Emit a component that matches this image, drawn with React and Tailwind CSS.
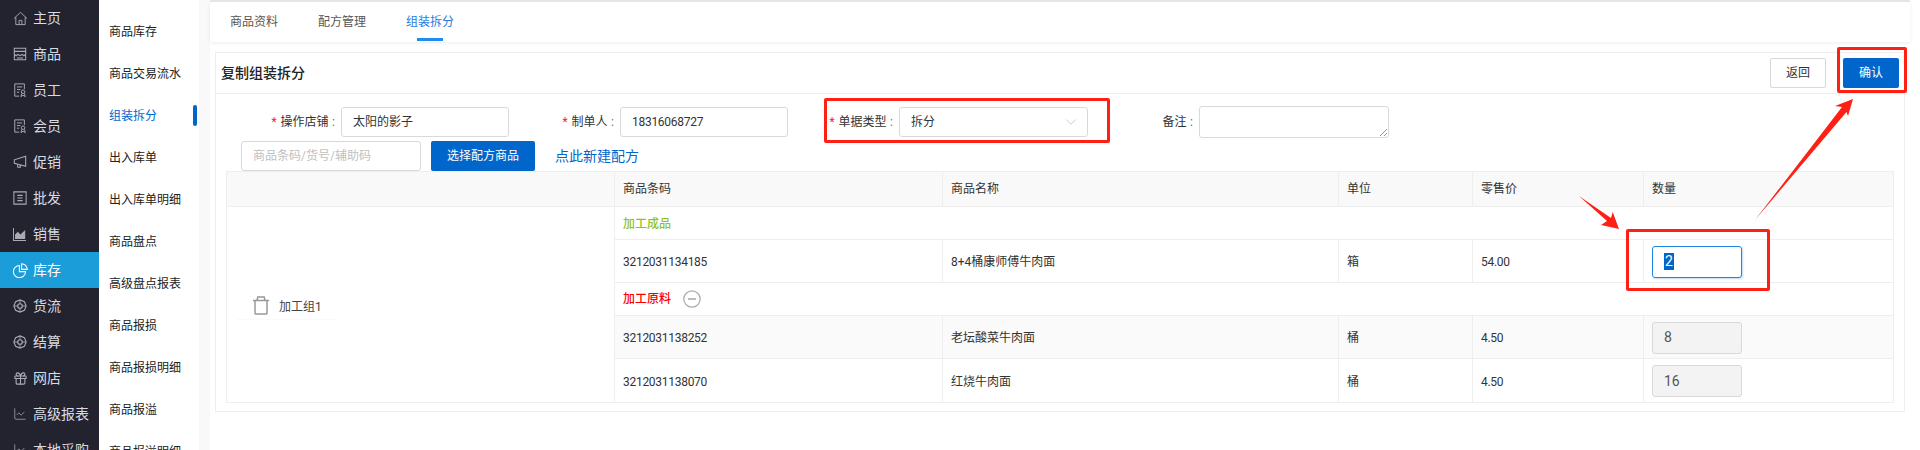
import { ChevronDown, Gift, ChartLine } from "lucide-react";

const FONT = "font-['Roboto','Noto_Sans_CJK_SC',sans-serif]";

const Home = () => (
  <svg viewBox="0 0 16 16" className="w-[15px] h-[15px]" fill="none" stroke="currentColor" strokeWidth="1">
    <path d="M1 8 8 1.5 15 8M3 6.5V14.5H13V6.5M6.5 14.5V10H9.5V14.5" />
  </svg>
);
const Shop = () => (
  <svg viewBox="0 0 16 16" className="w-[14px] h-[14px]" fill="none" stroke="currentColor" strokeWidth="1.2">
    <path d="M1.5 1.5H14.5V14.5H1.5ZM1.5 5H14.5M1.5 8.5 3.5 10 5.5 8.5 8 10 10.5 8.5 12.5 10 14.5 8.5M4.5 12.5H11.5" />
  </svg>
);
const DocBadge = () => (
  <svg viewBox="0 0 16 16" className="w-[14px] h-[16px]" fill="none" stroke="currentColor" strokeWidth="1.1">
    <path d="M7 15H2V1H13V7M4.5 4.5H10.5M4.5 7.5H8.5M4.5 10.5H7" />
    <circle cx="11.5" cy="10" r="2" />
    <path d="M10 12 9 15.5 11.5 14 14 15.5 13 12" />
  </svg>
);
const Horn = () => (
  <svg viewBox="0 0 16 16" className="w-[14px] h-[14px]" fill="none" stroke="currentColor" strokeWidth="1.2">
    <path d="M14.5 1.5V13L1.5 9.5V5.5ZM5 10.5 5.5 14H8.5L8 11.5" />
  </svg>
);
const ListBox = () => (
  <svg viewBox="0 0 16 16" className="w-[14px] h-[14px]" fill="none" stroke="currentColor" strokeWidth="1.2">
    <path d="M1 1H15V15H1ZM5 5H11M5 8H11M5 11H11" />
  </svg>
);
const AreaChart = () => (
  <svg viewBox="0 0 16 16" className="w-[13px] h-[13px]" fill="currentColor">
    <path d="M0 0H1.2V14.8H16V16H0Z" />
    <path d="M2.5 13.5V8L6 4.5 9 8 15 2.5V13.5Z" />
  </svg>
);
const Pie = () => (
  <svg viewBox="0 0 16 16" className="w-[15px] h-[15px]" fill="none" stroke="currentColor" strokeWidth="1.1">
    <path d="M6.8 2.6A6.5 6.5 0 1 0 13.4 9.2H6.8Z" />
    <path d="M9.2 0.8A6.2 6.2 0 0 1 15.2 6.8H9.2Z" />
  </svg>
);
const Flow = () => (
  <svg viewBox="0 0 16 16" className="w-[14px] h-[14px]" fill="none" stroke="currentColor" strokeWidth="1.3">
    <path d="M8 1 13 3 15 8 13 13 8 15 3 13 1 8 3 3Z" />
    <circle cx="8" cy="8" r="2.6" />
    <path d="M8 1V5.4M8 10.6V15M1 8H5.4M10.6 8H15" strokeWidth="1" />
  </svg>
);
const Bin = () => (
  <svg viewBox="0 0 18 19" className="w-[18px] h-[19px] mr-[9px]" fill="none" stroke="#999" strokeWidth="1.5">
    <path d="M1 4.5H17M5 4.5 5.8 1H12.2L13 4.5M3 4.5V17.2Q3 18 3.8 18H14.2Q15 18 15 17.2V4.5" />
  </svg>
);
const MinusRound = () => (
  <svg viewBox="0 0 18 18" className="w-[18px] h-[18px] ml-[12px]" fill="none" stroke="#aaa">
    <circle cx="9" cy="9" r="8.2" strokeWidth="1.2" />
    <path d="M5 9H13" strokeWidth="1.6" />
  </svg>
);

const MENU = [
  ["主页", Home],
  ["商品", Shop],
  ["员工", DocBadge],
  ["会员", DocBadge],
  ["促销", Horn],
  ["批发", ListBox],
  ["销售", AreaChart],
  ["库存", Pie],
  ["货流", Flow],
  ["结算", Flow],
  ["网店", () => <Gift size={15} strokeWidth={1.8} />],
  ["高级报表", () => <ChartLine size={14} strokeWidth={1.3} />],
  ["本地采购", () => <ChartLine size={14} strokeWidth={1.3} />],
];

const SUB_MENU = ["商品库存", "商品交易流水", "组装拆分", "出入库单", "出入库单明细", "商品盘点", "高级盘点报表", "商品报损", "商品报损明细", "商品报溢", "商品报溢明细"];

const Field = ({ label, required, children }) => (
  <>
    <label className="w-[111px] shrink-0 h-[30px] flex items-center justify-end pr-[6px] text-[12px] text-[#333]">
      {required && <span className="text-[#f5222d] mr-[4px]">*</span>}
      {label}<span className="ml-[3.5px] text-[#666]">:</span>
    </label>
    {children}
  </>
);

const Cell = ({ children, className = "" }) => (
  <td className={`border border-[#eeeeee] pl-[8px] text-[12px] text-[#333] ${className}`}>{children}</td>
);

const Qty = ({ value }) => (
  <div className="w-[90px] h-[32px] rounded-[3px] border border-[#d9d9d9] bg-[#f3f3f3] flex items-center pl-[11px] text-[14px] text-[#555]">{value}</div>
);

const NUM = "pt-[2px] tracking-[-0.28px]";

export default function App() {
  return (
    <div className={`relative w-[1920px] h-[450px] overflow-hidden flex bg-white ${FONT}`}>
      <aside className="w-[99px] shrink-0 bg-[#22232f]">
        {MENU.map(([name, Icon]) => (
          <div key={name} className={`h-[36px] flex items-center pl-[13px] text-[14px] ${name === "库存" ? "bg-[#1b9dd9] text-white" : "text-[#d9dbe2]"}`}>
            <span className={`w-[20px] flex justify-start ${name === "库存" ? "text-white" : "text-[#a9abb3]"}`}><Icon /></span>
            {name}
          </div>
        ))}
      </aside>

      <nav className="w-[100px] shrink-0 pt-[11px] pl-[10px] pr-[2px]">
        {SUB_MENU.map((name) => (
          <div key={name} className={`relative h-[42px] flex items-center text-[12px] ${name === "组装拆分" ? "text-[#0066cc]" : "text-[#222]"}`}>
            {name}
            {name === "组装拆分" && <span className="absolute left-[84px] top-[10px] w-[4px] h-[21px] rounded-[2px] bg-[#0066cc]" />}
          </div>
        ))}
      </nav>
      <div className="w-[11px] shrink-0 bg-[#f9f9f9]" />

      <main className="flex-1 min-w-0">
        <div className="h-[2px] w-[1700px] bg-[#e8e8e8]" />
        <div className="w-[1700px] h-[40px] flex items-start gap-[40px] pl-[20px] bg-white shadow-[0_1px_4px_rgba(0,0,0,0.08)] text-[12px] text-[#555]">
          <span className="h-[40px] flex items-center">商品资料</span>
          <span className="h-[40px] flex items-center">配方管理</span>
          <span className="relative h-[40px] flex items-center text-[#1f7ae0]">
            组装拆分
            <span className="absolute left-[11px] bottom-[1px] w-[26px] h-[3px] bg-[#1f8cf0]" />
          </span>
        </div>

        <section className="ml-[5px] mt-[10px] w-[1690px] h-[360px] border border-[#eeeeee]">
          <div className="h-[41px] border-b border-[#eeeeee] flex items-center pl-[5px] pr-[5px] justify-between">
            <h2 className="text-[14px] font-medium text-[#222]">复制组装拆分</h2>
            <div className="flex gap-[17px]">
              <button className="w-[56px] h-[30px] rounded-[2px] border border-[#d9d9d9] bg-white text-[12px] text-[#333]">返回</button>
              <button className="w-[56px] h-[30px] rounded-[2px] bg-[#0066cc] text-[12px] text-white">确认</button>
            </div>
          </div>

          <div className="flex items-start h-[34px] mt-[13px] text-[12px]">
            <div className="w-[14px] shrink-0" />
            <Field label="操作店铺" required>
              <div className="w-[168px] h-[30px] shrink-0 rounded-[3px] border border-[#d9d9d9] flex items-center pl-[11px] text-[#333]">太阳的影子</div>
            </Field>
            <Field label="制单人" required>
              <div className="w-[168px] h-[30px] shrink-0 rounded-[3px] border border-[#d9d9d9] flex items-center pl-[11px] text-[#333] tracking-[-0.28px]">18316068727</div>
            </Field>
            <Field label="单据类型" required>
              <div className="w-[189px] h-[30px] shrink-0 rounded-[3px] border border-[#d9d9d9] flex items-center justify-between pl-[11px] pr-[7px] text-[#333]">
                拆分
                <ChevronDown size={18} strokeWidth={0.9} className="text-[#b5b5b5]" />
              </div>
            </Field>
            <Field label="备注">
              <div className="relative w-[190px] h-[32px] shrink-0 -mt-[1px] rounded-[3px] border border-[#d9d9d9]">
                <svg viewBox="0 0 8 8" className="absolute right-[1px] bottom-[1px] w-[8px] h-[8px]" stroke="#777" strokeWidth="0.8">
                  <path d="M1 8 8 1M5 8 8 5" />
                </svg>
              </div>
            </Field>
          </div>

          <div className="flex items-center h-[30px] pl-[25px] text-[12px]">
            <div className="w-[180px] h-[30px] rounded-[3px] border border-[#d9d9d9] flex items-center pl-[11px] text-[#bfbfbf]">商品条码/货号/辅助码</div>
            <button className="ml-[10px] w-[104px] h-[30px] rounded-[2px] bg-[#0066cc] text-white">选择配方商品</button>
            <a className="ml-[20px] text-[14px] text-[#0066cc]">点此新建配方</a>
          </div>

          <table className="ml-[10px] w-[1667px] table-fixed border-collapse">
            <colgroup>
              <col className="w-[388px]" />
              <col className="w-[328px]" />
              <col className="w-[396px]" />
              <col className="w-[134px]" />
              <col className="w-[171px]" />
              <col className="w-[250px]" />
            </colgroup>
            <thead>
              <tr className="h-[35px] bg-[#f9f9f9]">
                <Cell />
                <Cell>商品条码</Cell>
                <Cell>商品名称</Cell>
                <Cell>单位</Cell>
                <Cell>零售价</Cell>
                <Cell>数量</Cell>
              </tr>
            </thead>
            <tbody>
              <tr className="h-[33px]">
                <td rowSpan={5} className="border border-[#eeeeee] align-top">
                  <div className="mt-[88px] ml-[9px] w-[102px] h-[25px] flex items-center border-b border-[#fafafa] pb-[4px] pl-[16px] text-[12px] text-[#444]">
                    <Bin />
                    <span className="pt-[3px]">加工组1</span>
                  </div>
                </td>
                <td colSpan={5} className="border border-[#eeeeee] pl-[8px] pt-[2px] text-[12px] font-medium text-[#8fc31f]">加工成品</td>
              </tr>
              <tr className="h-[43px]">
                <Cell className={NUM}>3212031134185</Cell>
                <Cell className="pt-[2px]">8+4桶康师傅牛肉面</Cell>
                <Cell className="pt-[2px]">箱</Cell>
                <Cell className={NUM}>54.00</Cell>
                <Cell className="pt-[1px]">
                  <div className="w-[90px] h-[32px] rounded-[3px] border border-[#1f86e0] shadow-[1px_1px_2px_rgba(31,134,224,0.3)] flex items-center pl-[11px] text-[14px]">
                    <span className="bg-[#0066cc] text-white leading-[17px] px-[1px]">2</span>
                  </div>
                </Cell>
              </tr>
              <tr className="h-[33px]">
                <td colSpan={5} className="border border-[#eeeeee] pl-[8px] text-[12px] font-medium text-[#ff0000]">
                  <span className="inline-flex items-center">
                    加工原料
                    <MinusRound />
                  </span>
                </td>
              </tr>
              <tr className="h-[43px] bg-[#fafafa]">
                <Cell className={NUM}>3212031138252</Cell>
                <Cell className="pt-[2px]">老坛酸菜牛肉面</Cell>
                <Cell className="pt-[2px]">桶</Cell>
                <Cell className={NUM}>4.50</Cell>
                <Cell className="pt-[1px]"><Qty value="8" /></Cell>
              </tr>
              <tr className="h-[44px]">
                <Cell className={NUM}>3212031138070</Cell>
                <Cell className="pt-[2px]">红烧牛肉面</Cell>
                <Cell className="pt-[2px]">桶</Cell>
                <Cell className={NUM}>4.50</Cell>
                <Cell className="pt-[1px]"><Qty value="16" /></Cell>
              </tr>
            </tbody>
          </table>
        </section>
      </main>

      {/* red annotations drawn over the page */}
      <div className="absolute left-[824px] top-[98px] w-[286px] h-[45px] border-[3px] border-[#ff2015] rounded-[2px]" />
      <div className="absolute left-[1837px] top-[47px] w-[70px] h-[46px] border-[3px] border-[#ff2015] rounded-[2px]" />
      <div className="absolute left-[1626px] top-[229px] w-[144px] h-[62px] border-[3px] border-[#ff2015] rounded-[2px]" />
      <svg className="absolute left-0 top-0 w-[1920px] h-[450px] pointer-events-none" viewBox="0 0 1920 450" fill="#ff2015">
        <polygon points="1755,220 1842,107 1835,106 1853,99 1848,116 1846.5,112" />
        <polygon points="1579,196 1611,218 1612.7,212 1619,229 1601,225 1607,221" />
      </svg>
    </div>
  );
}
